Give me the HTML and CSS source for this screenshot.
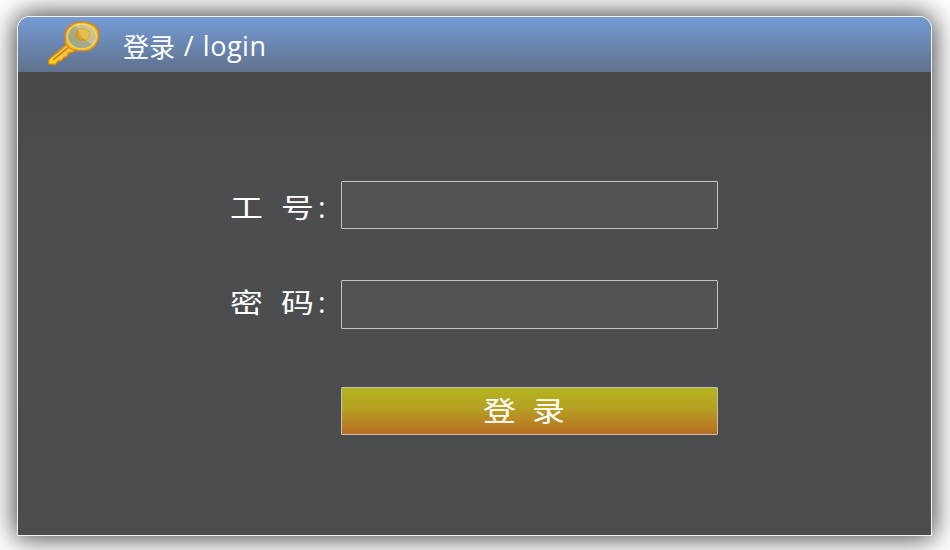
FILE: index.html
```html
<!DOCTYPE html>
<html lang="zh-CN">
<head>
<meta charset="utf-8">
<title>登录 / login</title>
<link rel="stylesheet" href="styles.css">
</head>
<body>
<main class="panel">
  <header class="header">
    <svg class="key" width="56" height="50" viewBox="0 0 56 50">
      <defs>
        <linearGradient id="gold" x1="0" y1="1" x2="1" y2="0">
          <stop offset="0" stop-color="#ffdc13"/>
          <stop offset=".5" stop-color="#f4c536"/>
          <stop offset="1" stop-color="#eec43c"/>
        </linearGradient>
        <linearGradient id="lens" x1="0" y1="1" x2="1" y2="0">
          <stop offset="0" stop-color="#9aa68a"/>
          <stop offset=".5" stop-color="#aaa988"/>
          <stop offset="1" stop-color="#c8c272"/>
        </linearGradient>
      </defs>
      <path d="M22 25 L4.500 40 Q3 42 3.500 45 L10.500 45.500 L13 42 L16.500 41.500 L19 38.500 L22 37.500 L23.500 34 L28 33 L32 30 Z" fill="url(#gold)" stroke="#df850e" stroke-width="1.400" stroke-linejoin="round"/>
      <path d="M8 41 L24 28" fill="none" stroke="#bd6b27" stroke-width="1.200"/>
      <path d="M32 3.500 H41 Q50 5 53.300 12 V20 Q51 28 43 31.500 H33 Q24 31 20.500 24 V14 Q23 6 32 3.500 Z" fill="#efbd27" stroke="#e2890d" stroke-width="1.500"/>
      <ellipse cx="36.900" cy="17.500" rx="14.500" ry="12.300" fill="url(#lens)" stroke="#eed55f" stroke-width="1.300"/>
      <path d="M34 10 H41 L44.500 13 V18 L41 21 H35 L32 18 V13 Z" fill="#d6ac2f" stroke="#d89022" stroke-width="1.500"/>
      <path d="M30 5.500 Q43 1 50.500 13 Q52 22 47.500 26.500 L37 18 Z" fill="#fff6bd" fill-opacity=".28"/>
    </svg>
    <h1 class="title">登录<span class="latin"> / login</span></h1>
  </header>
  <form class="form">
    <label class="label" for="staff"><span class="wide">工</span><span class="wide">号</span><span class="colon">:</span></label>
    <input class="field" id="staff" type="text">
    <label class="label label-password" for="password"><span class="wide">密</span><span class="wide">码</span><span class="colon">:</span></label>
    <input class="field field-password" id="password" type="password">
    <button class="submit" type="button"><span class="wide">登</span><span class="wide">录</span></button>
  </form>
</main>
</body>
</html>
```
FILE: styles.css
```css
* { box-sizing: border-box; }
body {
  margin: 0;
  height: 550px;
  padding: 16px 18px 14px 17px;
  overflow: hidden;
  background: #fff;
  color: #fff;
  font-family: "Open Sans", "Noto Sans CJK SC", sans-serif;
}
.panel {
  height: 520px;
  border: 1px solid #f2f2f2;
  border-radius: 13px 13px 0 0;
  background: linear-gradient(#484848, #4a4a4a 110px, #4c4d4f 150px, #4b4c4e);
  background-origin: border-box;
  box-shadow: 0 0 27px 2px rgba(0, 0, 0, .76);
}
.header {
  display: flex;
  height: 55px;
  padding-left: 27px;
  border-radius: 12px 12px 0 0;
  background: linear-gradient(#759cd5, #5f718c);
}
.key { margin-top: 2px; }
.title {
  margin: 12px 0 0 22px;
  font-size: 26px;
  font-weight: 400;
  line-height: 36px;
  white-space: pre;
}
.latin {
  position: relative;
  top: -1px;
  font-size: 27px;
  letter-spacing: .5px;
  word-spacing: 1.2px;
}
.form {
  display: grid;
  grid-template-columns: 111px 377px;
  grid-template-rows: 48px 49px 48px;
  row-gap: 51px;
  padding: 109px 0 0 212px;
}
.label {
  display: flex;
  gap: 18px;
  padding-top: 7px;
  font-size: 27px;
  line-height: 40px;
}
.label-password { padding-top: 3px; }
.wide {
  width: 33px;
  flex: none;
  transform: scaleX(1.22);
  transform-origin: left;
}
.colon {
  margin: -1px 0 0 -14px;
  font-size: 29px;
}
.field {
  width: 377px;
  height: 100%;
  margin: 0;
  padding: 0 10px;
  border: 1px solid #c4c4c4;
  border-radius: 1px;
  outline: 0;
  background: #525355;
  color: #fff;
  font: 24px "Open Sans", sans-serif;
}
.submit {
  grid-column: 2;
  display: flex;
  gap: 16px;
  height: 48px;
  margin-top: 7px;
  padding: 2px 0 0 141px;
  border: 1px solid #c4c0b0;
  border-radius: 1px;
  background: linear-gradient(#b4b520, #b5a022 45%, #ba6d25);
  color: #fff;
  font: 27px/40px "Noto Sans CJK SC", sans-serif;
  text-align: left;
}
```
